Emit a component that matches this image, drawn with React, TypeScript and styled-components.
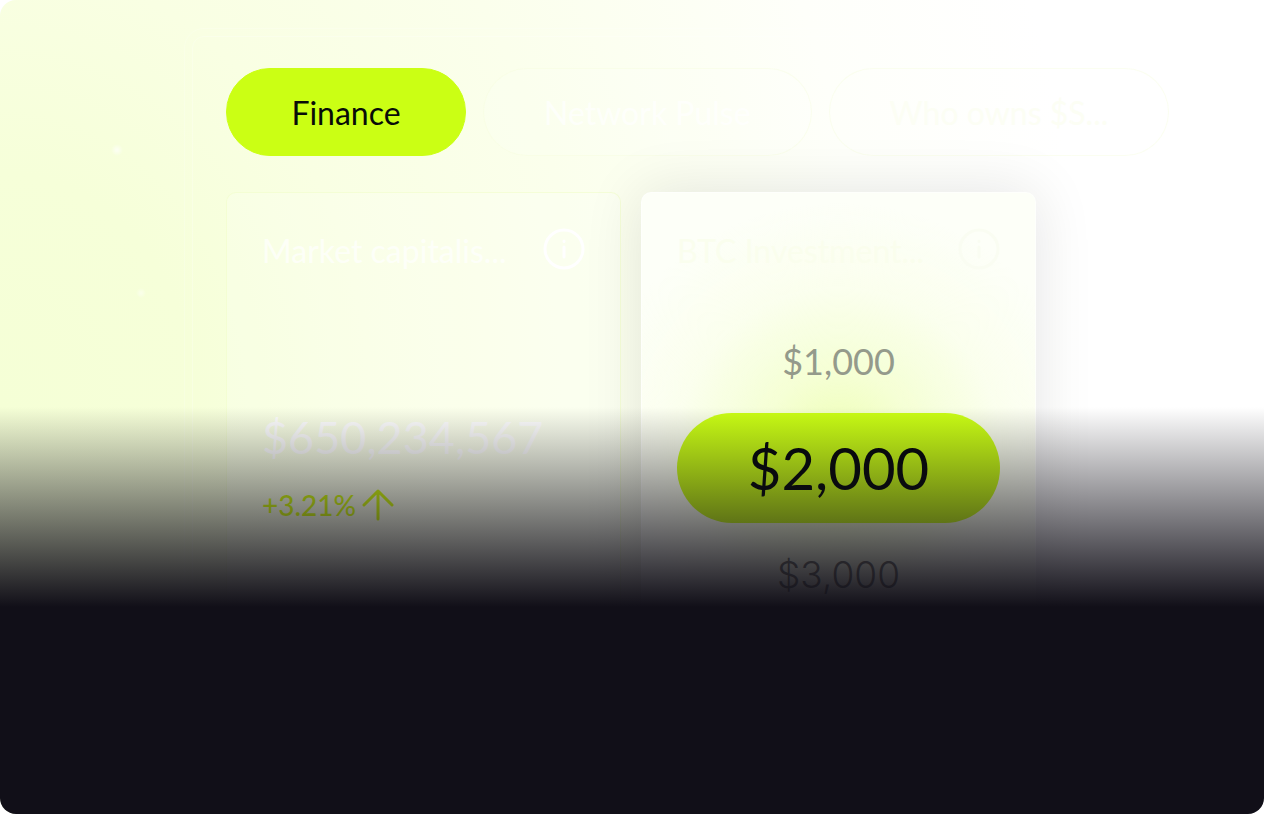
import React from "react";
import styled, { createGlobalStyle, css } from "styled-components";

const GlobalStyle = createGlobalStyle`
  *, *::before, *::after { box-sizing: border-box; }
  body { margin: 0; background: #fff; font-family: Lato, "Liberation Sans", sans-serif; }
  button { font: inherit; cursor: pointer; }
`;

const Stage = styled.main`
  position: relative;
  min-height: 100vh;
  padding: 28px 24px 32px;
  overflow: hidden;
  border-radius: 16px;
  background:
    radial-gradient(circle at 117px 150px, rgba(255, 255, 255, 0.6) 0 1px, transparent 6px),
    radial-gradient(circle at 141px 293px, rgba(255, 255, 255, 0.4) 0 1px, transparent 5px),
    radial-gradient(ellipse 86% 160% at 0% 50%, #f5ffd6 0%, #f6ffd9 18%, #f9ffe3 34%, #fbffec 54%, #fefffa 80%, #fff 100%);
`;

const Device = styled.section`
  max-width: 896px;
  margin: 0 auto;
  padding: 39px 43px 32px 41px;
  border: 1px solid rgba(255, 255, 255, 0.2);
  border-radius: 20px;
  outline: 1px solid rgba(255, 255, 255, 0.25);
  outline-offset: -9px;
`;

const Tabs = styled.nav`
  display: flex;
  gap: 17px;
  margin-bottom: 36px;
`;

const Tab = styled.button<{ $active?: boolean; $tinted?: boolean }>`
  flex: none;
  height: 88px;
  padding: 2px 60px 0;
  border: 1px solid rgba(244, 252, 216, 0.35);
  border-radius: 44px;
  background: rgba(255, 255, 255, 0.15);
  color: ${(p) => (p.$tinted ? "#fcfef4" : "rgba(255, 255, 255, 0.7)")};
  font-size: 32px;
  line-height: 40px;
  white-space: nowrap;
  ${(p) =>
    p.$active &&
    css`
      min-width: 240px;
      border-color: #cbff14;
      background: #cbff14;
      color: #080c08;
    `}
`;

const Cards = styled.div`
  display: grid;
  grid-template-columns: repeat(2, minmax(0, 1fr));
  gap: 20px;
`;

const Card = styled.article<{ $raised?: boolean }>`
  display: flex;
  flex-direction: column;
  min-height: 480px;
  padding: 34px 35px;
  border: 1px solid rgba(240, 253, 200, 0.6);
  border-radius: 10px;
  background: rgba(255, 255, 255, 0.2);
  ${(p) =>
    p.$raised &&
    css`
      border-color: rgba(255, 255, 255, 0.6);
      background:
        radial-gradient(ellipse 250px 240px at 50% 250px, #eeffb6 0%, rgba(243, 255, 204, 0.8) 30%, rgba(249, 255, 228, 0.5) 65%, rgba(254, 255, 250, 0) 100%),
        #fdfff8;
      box-shadow: 0 0 60px rgba(20, 20, 26, 0.11);
    `}
`;

const CardHead = styled.header`
  display: flex;
  align-items: center;
  justify-content: space-between;
  height: 44px;
`;

const Title = styled.h2<{ $faint?: boolean }>`
  margin: 0;
  padding-top: 4px;
  color: ${(p) => (p.$faint ? "rgba(250, 254, 236, 0.8)" : "rgba(255, 255, 255, 0.7)")};
  font-size: 32px;
  font-weight: 400;
  line-height: 40px;
  white-space: nowrap;
`;

const InfoButton = styled.button<{ $faint?: boolean }>`
  display: flex;
  padding: 0;
  border: 0;
  background: none;
  color: ${(p) => (p.$faint ? "#fafdf2" : "#fff")};
`;

const Figure = styled.p`
  margin: 138px 0 0;
  color: #fff;
  font-size: 45px;
  line-height: 56px;
`;

const Change = styled.p`
  display: flex;
  align-items: center;
  gap: 6px;
  margin: 20px 0 0;
  color: #d6ff0c;
  font-size: 28px;
  font-weight: 500;
  line-height: 40px;
`;

const Picker = styled.div`
  display: flex;
  flex-direction: column;
  margin-top: 66px;
`;

const Amount = styled.button<{ $tone: "above" | "picked" | "below" }>`
  height: 48px;
  padding: 0;
  border: 0;
  background: none;
  color: #949a8b;
  font-size: 36px;
  line-height: 48px;
  ${(p) =>
    p.$tone === "picked" &&
    css`
      height: 110px;
      margin: 28px 0;
      border-radius: 55px;
      background: #cbff14;
      color: #05080a;
      font-size: 58px;
      line-height: 72px;
    `}
  ${(p) =>
    p.$tone === "below" &&
    css`
      color: #707268;
      font-family: Inter, "Liberation Sans", sans-serif;
      font-size: 37px;
      font-weight: 300;
    `}
`;

const Fade = styled.div`
  position: absolute;
  inset: 50% 0 0;
  background: linear-gradient(to bottom, rgba(17, 15, 24, 0) 0, #110f18 200px);
  pointer-events: none;
`;

function Info({ label, faint }: { label: string; faint?: boolean }) {
  return (
    <InfoButton type="button" aria-label={label} $faint={faint}>
      <svg width="42" height="42" viewBox="0 0 42 42" fill="none" stroke="currentColor" strokeWidth="3" strokeLinecap="round">
        <circle cx="21" cy="21" r="19" />
        <path d="M21 19v10M21 13v.5" />
      </svg>
    </InfoButton>
  );
}

export default function App() {
  return (
    <>
      <GlobalStyle />
      <Stage>
        <Device>
          <Tabs aria-label="Sections">
            <Tab type="button" $active>Finance</Tab>
            <Tab type="button">Network Pulse</Tab>
            <Tab type="button" $tinted>Who owns $S...</Tab>
          </Tabs>
          <Cards>
            <Card>
              <CardHead>
                <Title>Market capitalis...</Title>
                <Info label="About market capitalisation" />
              </CardHead>
              <Figure>$650,234,567</Figure>
              <Change>
                +3.21%
                <svg width="32" height="32" viewBox="0 0 32 32" fill="none" stroke="currentColor" strokeWidth="3" strokeLinecap="round" strokeLinejoin="round" aria-hidden="true">
                  <path d="M16 30V2M2 16 16 2l14 14" />
                </svg>
              </Change>
            </Card>
            <Card $raised>
              <CardHead>
                <Title $faint>BTC Investment...</Title>
                <Info label="About BTC investment" faint />
              </CardHead>
              <Picker role="group" aria-label="Investment amount">
                <Amount type="button" $tone="above">$1,000</Amount>
                <Amount type="button" $tone="picked" aria-pressed="true">$2,000</Amount>
                <Amount type="button" $tone="below">$3,000</Amount>
              </Picker>
            </Card>
          </Cards>
        </Device>
        <Fade />
      </Stage>
    </>
  );
}
